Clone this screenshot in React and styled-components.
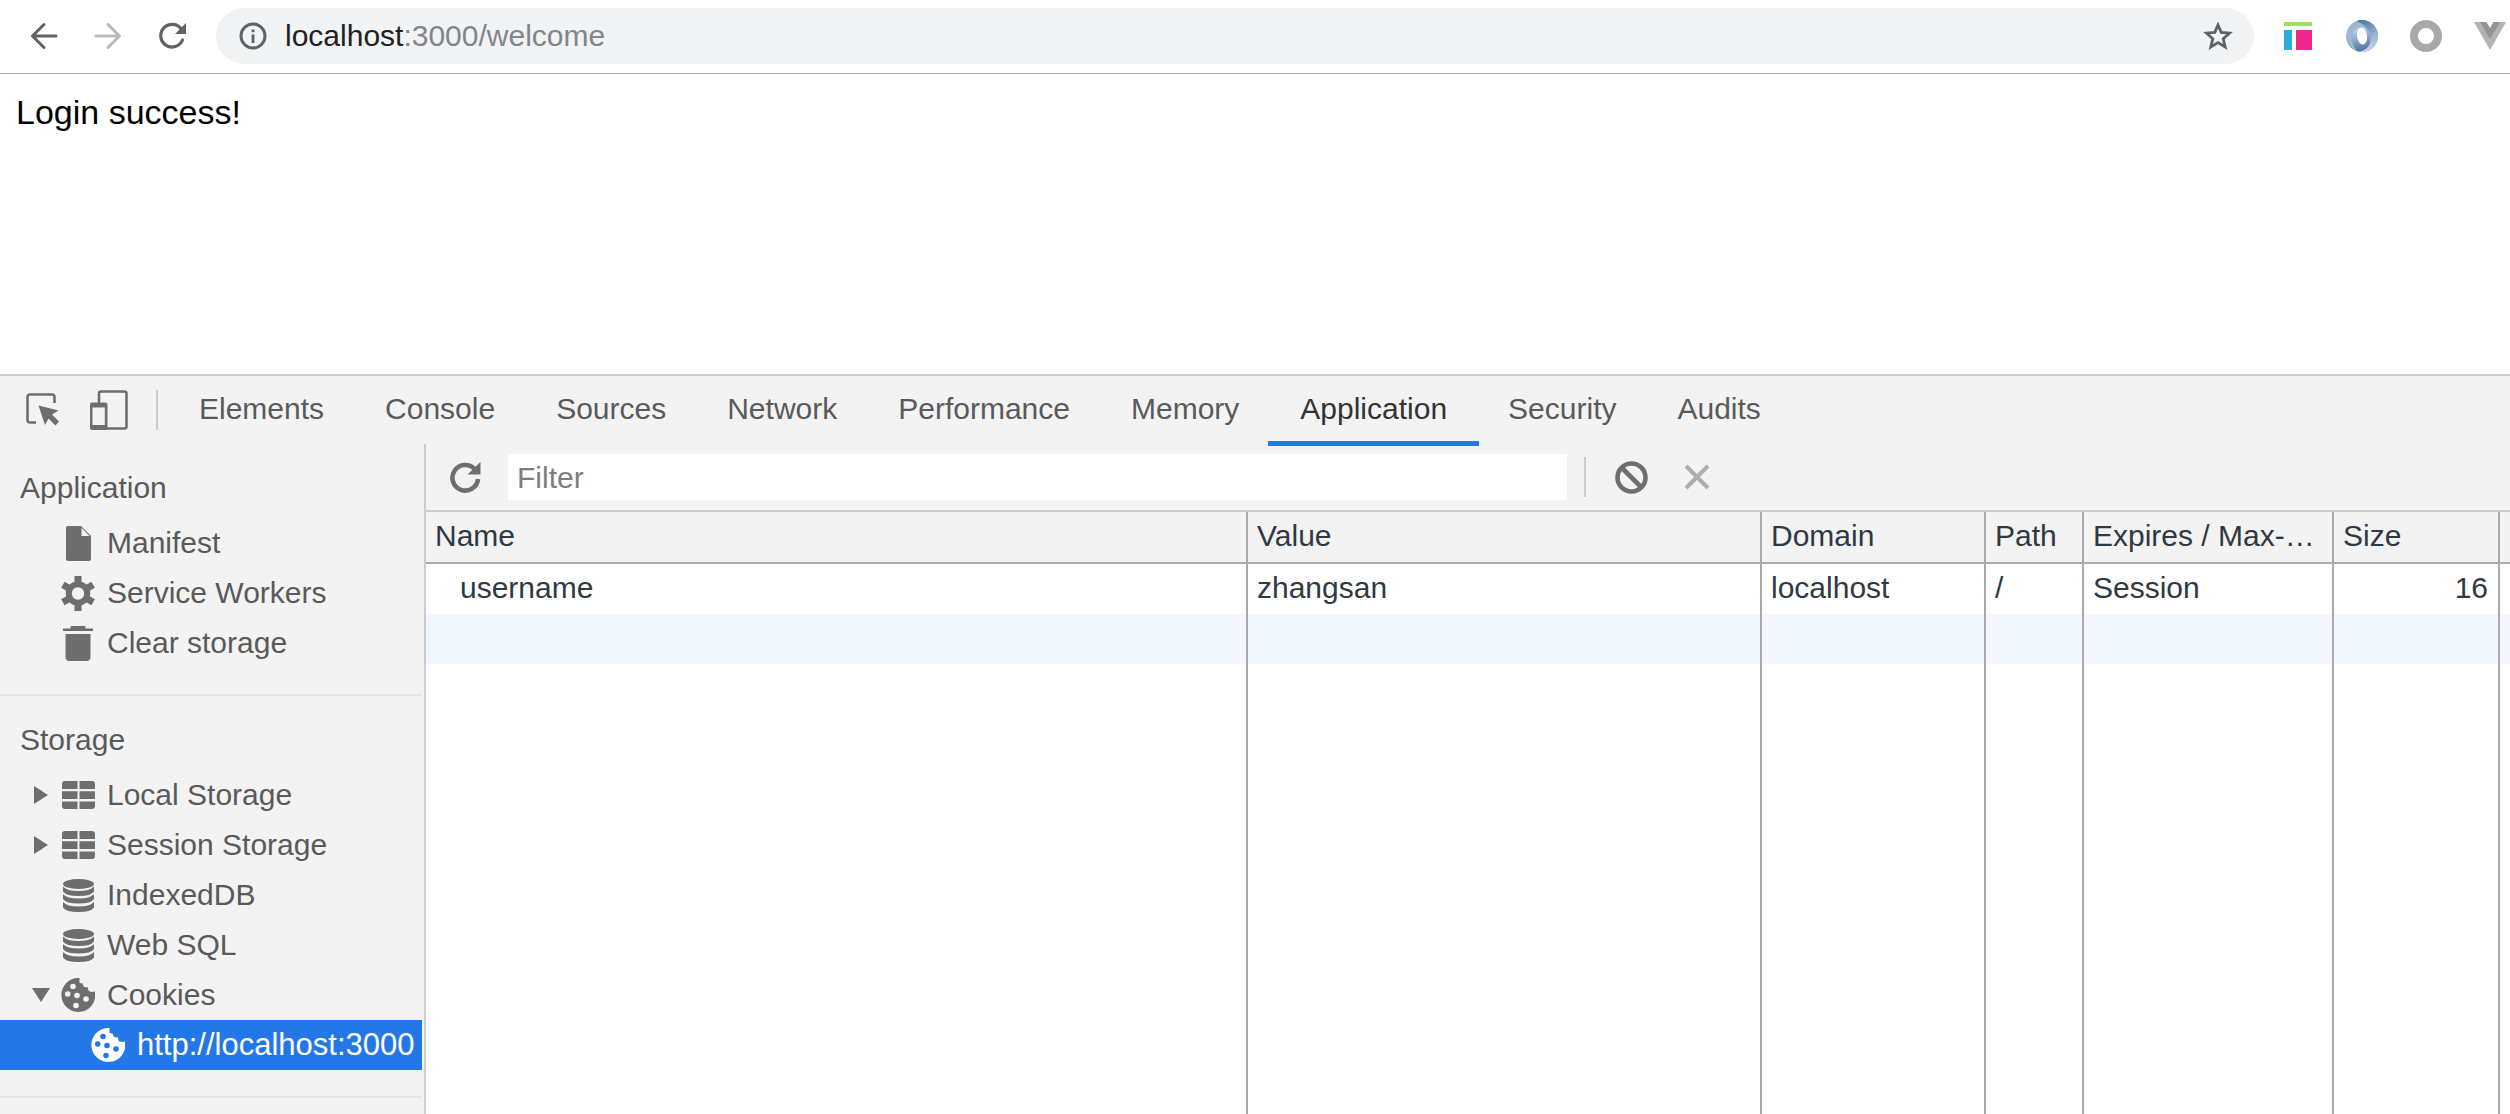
import React, { useState } from 'react'
import styled, { createGlobalStyle } from 'styled-components'


const GlobalStyle = createGlobalStyle`
    * {
        box-sizing: border-box;
    }

    body {
        margin: 0;
        background-color: #fff;
        font-family: "Liberation Sans", Arial, Helvetica, sans-serif;
        font-size: 30px;
    }

    button, input {
        font: inherit;
        color: inherit;
        border: 0;
        padding: 0;
        background: none;
    }

    svg {
        display: block;
    }
`

const Window = styled.div`
    display: flex;
    flex-direction: column;
    height: 100vh;
    overflow: hidden;
`

const BrowserBar = styled.header`
    display: flex;
    flex: none;
    align-items: center;
    padding: 8px 4px 9px 12px;
    border-bottom: 1px solid #a9abae;
`

const NavButton = styled.button`
    display: grid;
    place-items: center;
    width: 64px;
    height: 56px;
    color: ${props => props.disabled ? '#bababa' : '#5f6368'};
`

const AddressBar = styled.div`
    display: flex;
    flex: 1;
    align-items: center;
    min-width: 0;
    height: 56px;
    margin: 0 28px 0 12px;
    padding: 0 20px 0 23px;
    border-radius: 28px;
    background-color: #f1f3f4;
    color: #5f6368;
`

const Url = styled.div`
    flex: 1;
    margin-left: 18px;
    color: #80868b;
    font-size: 30px;
    outline: none;

    b {
        color: #202124;
        font-weight: normal;
    }
`

const Extensions = styled.div`
    display: flex;
    flex: none;
    gap: 32px;
`

const ExtensionButton = styled.button`
    display: grid;
    place-items: center;
    width: 32px;
    height: 32px;
`

const Page = styled.main`
    flex: none;
    min-height: 300px;
    padding: 16px;
    color: #000;
    font-size: 34px;
    line-height: 44px;
`

const DevTools = styled.section`
    display: flex;
    flex: 1;
    flex-direction: column;
    min-height: 0;
    border-top: 2px solid #ccc;
    background-color: #f3f3f3;
    color: #5a5a5a;
`

const TabBar = styled.div`
    position: relative;
    z-index: 1;
    display: flex;
    flex: none;
    height: 68px;
    padding-left: 10px;
`

const ToolButton = styled.button`
    display: grid;
    place-items: center;
    flex: none;
    width: 66px;
    color: ${props => props.disabled ? '#adadad' : '#6e6e6e'};
`

const Divider = styled.span`
    flex: none;
    align-self: center;
    width: 2px;
    height: 40px;
    margin: 0 12px 0 14px;
    background-color: #ccc;
`

const Tab = styled.button`
    height: 70px;
    margin-left: -3px;
    padding: 0 32px;
    border-bottom: 5px solid ${props => props.$active ? '#2678e3' : 'transparent'};
    color: ${props => props.$active ? '#333' : '#5a5a5a'};
`

const Panels = styled.div`
    display: flex;
    flex: 1;
    min-height: 0;
`

const Sidebar = styled.nav`
    flex: none;
    width: 426px;
    padding-right: 2px;
    border-right: 2px solid #ccc;
    overflow: hidden;
`

const Group = styled.section`
    padding: 14px 0 26px;
    border-bottom: 2px solid #e6e6e6;
`

const GroupTitle = styled.h2`
    margin: 0;
    padding-left: 20px;
    font-size: 30px;
    font-weight: normal;
    line-height: 60px;
`

const TreeItem = styled.button`
    display: flex;
    align-items: center;
    width: 100%;
    height: 50px;
    padding-left: ${props => props.$nested ? '60px' : '30px'};
    background-color: ${props => props.$selected ? '#2477e6' : 'transparent'};
    color: ${props => props.$selected ? '#fff' : '#5a5a5a'};
    font-size: ${props => props.$selected ? '31px' : '30px'};
    text-align: left;
    white-space: nowrap;
`

const Arrow = styled.span`
    display: grid;
    place-items: center;
    flex: none;
    width: 22px;
    margin-right: 8px;
    color: #6e6e6e;
`

const ItemIcon = styled.span`
    display: grid;
    place-items: center;
    flex: none;
    width: 36px;
    margin-right: 11px;
    color: ${props => props.$selected ? '#fff' : '#6e6e6e'};
`

const Main = styled.div`
    display: flex;
    flex: 1;
    flex-direction: column;
    min-width: 0;
`

const Toolbar = styled.div`
    display: flex;
    flex: none;
    height: 68px;
    padding-left: 6px;
    border-bottom: 2px solid #ccc;
`

const FilterInput = styled.input`
    flex: 0 1 1059px;
    align-self: center;
    min-width: 0;
    height: 46px;
    margin: 0 3px 0 10px;
    padding: 2px 9px 0;
    background-color: #fff;
    color: #333;

    &::placeholder {
        color: #7d7d7d;
    }
`

const Grid = styled.div`
    display: grid;
    flex: 1;
    min-height: 0;
    background-color: #fff;
`

const Table = styled.table`
    width: 100%;
    height: 100%;
    table-layout: fixed;
    border-collapse: separate;
    border-spacing: 0;
    color: #303942;
`

const Col = styled.col`
    width: ${props => props.$width || 'auto'};
`

const HeadCell = styled.th`
    height: 52px;
    padding: 0 8px 3px 9px;
    border-right: 2px solid #aaa;
    border-bottom: 2px solid #aaa;
    background-color: #f3f3f3;
    font-weight: normal;
    text-align: left;
    white-space: nowrap;
    overflow: hidden;
    text-overflow: ellipsis;

    &:last-child {
        border-right: 0;
    }
`

const Row = styled.tr`
    height: ${props => props.$fill ? 'auto' : '50px'};
    background-color: ${props => props.$striped ? '#f2f7fd' : '#fff'};
`

const Cell = styled.td`
    padding: 0 10px 3px ${props => props.$indent ? '34px' : '9px'};
    border-right: 2px solid #aaa;
    text-align: ${props => props.$right ? 'right' : 'left'};
    white-space: nowrap;

    &:last-child {
        padding: 0;
        border-right: 0;
    }
`


const BackIcon = () => (
    <svg width="28" height="28" viewBox="0 0 28 28" fill="none" stroke="currentColor" strokeWidth="3" strokeLinecap="round" strokeLinejoin="round">
        <path d="M26 14H3M14 2.5L2.5 14L14 25.5" />
    </svg>
)

const ForwardIcon = () => (
    <svg width="28" height="28" viewBox="0 0 28 28" fill="none" stroke="currentColor" strokeWidth="3" strokeLinecap="round" strokeLinejoin="round">
        <path d="M2 14h23M14 2.5L25.5 14L14 25.5" />
    </svg>
)

const ReloadIcon = () => (
    <svg width="28" height="28" viewBox="0 0 28 28">
        <path d="M23.5 7.5A11.3 11.3 0 1 0 24.5 18" fill="none" stroke="currentColor" strokeWidth="3.2" strokeLinecap="round" />
        <path d="M28 1V12H17Z" fill="currentColor" />
    </svg>
)

const InfoIcon = () => (
    <svg width="28" height="28" viewBox="0 0 28 28">
        <circle cx="14" cy="14" r="12" fill="none" stroke="currentColor" strokeWidth="3" />
        <path d="M12.6 12.5h2.8V21h-2.8zM12.6 7.5h2.8v2.8h-2.8z" fill="currentColor" />
    </svg>
)

const StarIcon = () => (
    <svg width="30" height="28" viewBox="0 0 30 28" fill="none" stroke="currentColor" strokeWidth="2.8">
        <path d="M15 3L18.2 10.4L26.5 11.2L20.2 16.7L22.2 25L15 20.6L7.8 25L9.8 16.7L3.5 11.2L11.8 10.4Z" />
    </svg>
)

const LayoutExtIcon = () => (
    <svg width="28" height="28" viewBox="0 0 28 28">
        <rect width="28" height="4" fill="#a4de5c" />
        <rect y="8" width="8" height="20" fill="#29abe2" />
        <rect x="12" y="8" width="16" height="20" fill="#f0278c" />
    </svg>
)

const JsonExtIcon = () => (
    <svg width="32" height="32" viewBox="0 0 32 32">
        <defs>
            <linearGradient id="ringLeft" x1="0" y1="0" x2="0.3" y2="1">
                <stop offset="0" stopColor="#86a3c3" />
                <stop offset="0.4" stopColor="#b4cae2" />
                <stop offset="1" stopColor="#54769d" />
            </linearGradient>
            <linearGradient id="ringRight" x1="0" y1="0" x2="0.3" y2="1">
                <stop offset="0" stopColor="#4d719a" />
                <stop offset="0.6" stopColor="#8fadcc" />
                <stop offset="1" stopColor="#bfd3e8" />
            </linearGradient>
        </defs>
        <circle cx="16" cy="16" r="16" fill="url(#ringLeft)" />
        <path d="M10 1.200A16 16 0 1 1 13 31.700C22 30 26 23 24 15C22 8 17 3 10 1.200Z" fill="url(#ringRight)" />
        <path d="M5 5Q14 2 20 8Q11 5 7 12Q3 21 11 31Q2 27 1 18Q1 10 5 5Z" fill="#9db7d4" />
        <ellipse cx="16" cy="16" rx="5" ry="8.500" fill="#fff" transform="rotate(-8 16 16)" />
    </svg>
)

const RingExtIcon = () => (
    <svg width="32" height="32" viewBox="0 0 32 32">
        <circle cx="16" cy="16" r="12" fill="none" stroke="#a8a8a8" strokeWidth="8" />
    </svg>
)

const VueExtIcon = () => (
    <svg width="32" height="28" viewBox="0 0 32 28">
        <path d="M0 0H32L16 28Z" fill="#b3b3b3" />
        <path d="M6 0H26L16 17Z" fill="#939393" />
        <path d="M12.500 0H19.500L16 6Z" fill="#fff" />
    </svg>
)

const InspectIcon = () => (
    <svg width="34" height="34" viewBox="0 0 34 34">
        <path d="M10 29.500H4Q1.500 29.500 1.500 27V4Q1.500 1.500 4 1.500H26Q28.500 1.500 28.500 4V10" fill="none" stroke="currentColor" strokeWidth="2.600" />
        <path d="M12.500 12.500L32.500 17.500L26 21.500L33 28.500L29.500 32.500L22.500 25.500L19 32Z" fill="currentColor" />
    </svg>
)

const DeviceIcon = () => (
    <svg width="38" height="40" viewBox="0 0 38 40">
        <path d="M9 13V3.500Q9 1.500 11 1.500H34.500Q36.500 1.500 36.500 3.500V36.500Q36.500 38.500 34.500 38.500H15" fill="none" stroke="currentColor" strokeWidth="2.600" />
        <path fillRule="evenodd" d="M2 12.500H15.500Q17.500 12.500 17.500 14.500V40H2Q0 40 0 38V14.500Q0 12.500 2 12.500ZM2.500 17.500V35H14.800V17.500Z" fill="currentColor" />
    </svg>
)

const RefreshIcon = () => (
    <svg width="31" height="31" viewBox="0 0 31 31">
        <path d="M25 7.500A12.800 12.800 0 1 0 28 17" fill="none" stroke="currentColor" strokeWidth="4.600" />
        <path d="M30.500 0V12.500H17.500Z" fill="currentColor" />
    </svg>
)

const BlockIcon = () => (
    <svg width="33" height="33" viewBox="0 0 33 33" fill="none" stroke="currentColor" strokeWidth="4.600">
        <circle cx="16.5" cy="16.5" r="14" />
        <path d="M7 7L26 26" />
    </svg>
)

const CloseIcon = () => (
    <svg width="26" height="26" viewBox="0 0 26 26" fill="none" stroke="currentColor" strokeWidth="4">
        <path d="M2 2L24 24M24 2L2 24" />
    </svg>
)

const RightArrow = () => (
    <svg width="14" height="18" viewBox="0 0 14 18">
        <path d="M0 0L14 9L0 18Z" fill="currentColor" />
    </svg>
)

const DownArrow = () => (
    <svg width="18" height="14" viewBox="0 0 18 14">
        <path d="M0 0H18L9 14Z" fill="currentColor" />
    </svg>
)

const FileIcon = () => (
    <svg width="25" height="35" viewBox="0 0 25 35">
        <path d="M2 0H15L25 10V33Q25 35 23 35H2Q0 35 0 33V2Q0 0 2 0Z" fill="currentColor" />
        <path d="M15.500 1.800V10H23.500Z" fill="#f3f3f3" />
    </svg>
)

const GearIcon = () => (
    <svg width="34" height="35" viewBox="0 0 34 35">
        <g fill="none" stroke="currentColor">
            <circle cx="17" cy="17.5" r="9.200" strokeWidth="6" />
            <g strokeWidth="7">
                <path d="M17 0V7M17 28V35" />
                <path d="M17 0V7M17 28V35" transform="rotate(60 17 17.5)" />
                <path d="M17 0V7M17 28V35" transform="rotate(120 17 17.5)" />
            </g>
        </g>
    </svg>
)

const TrashIcon = () => (
    <svg width="30" height="35" viewBox="0 0 30 35">
        <path d="M0 2.500H7.500V1Q7.500 0 8.500 0H21.500Q22.500 0 22.500 1V2.500H30V5H0ZM2.500 8H27.500V31Q27.500 35 23.500 35H6.500Q2.500 35 2.500 31Z" fill="currentColor" />
    </svg>
)

const TableIcon = () => (
    <svg width="33" height="28" viewBox="0 0 33 28">
        <path d="M3 0H15.500V8H0V3Q0 0 3 0ZM17.500 0H30Q33 0 33 3V8H17.500ZM0 10.300H15.500V18H0ZM17.500 10.300H33V18H17.500ZM0 20.500H15.500V28H3Q0 28 0 25ZM17.500 20.500H33V25Q33 28 30 28H17.500Z" fill="currentColor" />
    </svg>
)

const DatabaseIcon = () => (
    <svg width="31" height="33" viewBox="0 0 31 33" fill="currentColor">
        <ellipse cx="15.500" cy="5" rx="15.500" ry="5" />
        <path d="M0 7.500Q4 12 15.500 12T31 7.500V12.500Q28 17 15.500 17T0 12.500Z" />
        <path d="M0 15.300Q4 19.500 15.500 19.500T31 15.300V20Q28 24.500 15.500 24.500T0 20Z" />
        <path d="M0 23Q4 27.500 15.500 27.500T31 23V28.500Q28 33 15.500 33T0 28.500Z" />
    </svg>
)

const CookieIcon = ({ hole = '#f3f3f3' }) => (
    <svg width="34" height="34" viewBox="0 0 34 34">
        <path d="M18.500 0A17 17 0 1 0 34 13.500L30.500 14L27.500 13L27 9.500L23 9L21.500 5.500L18.500 5Z" fill="currentColor" />
        <g fill={hole}>
            <circle cx="12" cy="8.500" r="2.800" />
            <circle cx="6.700" cy="16" r="2.800" />
            <circle cx="16" cy="17.500" r="2.800" />
            <circle cx="25" cy="21" r="2.800" />
            <circle cx="15" cy="27.500" r="2.800" />
        </g>
    </svg>
)


const tabs = ['Elements', 'Console', 'Sources', 'Network', 'Performance', 'Memory', 'Application', 'Security', 'Audits']

const groups = [
    {
        title: 'Application',
        items: [
            { label: 'Manifest', icon: <FileIcon /> },
            { label: 'Service Workers', icon: <GearIcon /> },
            { label: 'Clear storage', icon: <TrashIcon /> },
        ],
    },
    {
        title: 'Storage',
        items: [
            { label: 'Local Storage', icon: <TableIcon />, arrow: <RightArrow /> },
            { label: 'Session Storage', icon: <TableIcon />, arrow: <RightArrow /> },
            { label: 'IndexedDB', icon: <DatabaseIcon /> },
            { label: 'Web SQL', icon: <DatabaseIcon /> },
            { label: 'Cookies', icon: <CookieIcon />, arrow: <DownArrow /> },
            { label: 'http://localhost:3000', icon: <CookieIcon hole="#2477e6" />, nested: true, selected: true },
        ],
    },
]

const columns = [
    { name: 'Name' },
    { name: 'Value', width: '514px' },
    { name: 'Domain', width: '224px' },
    { name: 'Path', width: '98px' },
    { name: 'Expires / Max-Age', width: '250px' },
    { name: 'Size', width: '166px' },
    { name: '', width: '10px' },
]

const cookies = [
    ['username', 'zhangsan', 'localhost', '/', 'Session', '16', ''],
]

const App = () => {
    const [activeTab, setActiveTab] = useState('Application')
    const [filter, setFilter] = useState('')

    const rows = cookies.filter(cookie => cookie.join(' ').includes(filter))

    return (
        <Window>
            <GlobalStyle />

            <BrowserBar>
                <NavButton aria-label="Back"><BackIcon /></NavButton>
                <NavButton aria-label="Forward" disabled><ForwardIcon /></NavButton>
                <NavButton aria-label="Reload"><ReloadIcon /></NavButton>
                <AddressBar>
                    <InfoIcon />
                    <Url role="textbox" aria-label="Address" tabIndex={0}><b>localhost</b>:3000/welcome</Url>
                    <ExtensionButton aria-label="Bookmark"><StarIcon /></ExtensionButton>
                </AddressBar>
                <Extensions>
                    <ExtensionButton aria-label="Layout"><LayoutExtIcon /></ExtensionButton>
                    <ExtensionButton aria-label="JSON"><JsonExtIcon /></ExtensionButton>
                    <ExtensionButton aria-label="Recorder"><RingExtIcon /></ExtensionButton>
                    <ExtensionButton aria-label="Vue"><VueExtIcon /></ExtensionButton>
                </Extensions>
            </BrowserBar>

            <Page>Login success!</Page>

            <DevTools>
                <TabBar>
                    <ToolButton aria-label="Inspect"><InspectIcon /></ToolButton>
                    <ToolButton aria-label="Device toolbar"><DeviceIcon /></ToolButton>
                    <Divider />
                    {tabs.map(tab => (
                        <Tab key={tab} $active={tab === activeTab} onClick={() => setActiveTab(tab)}>{tab}</Tab>
                    ))}
                </TabBar>

                <Panels>
                    <Sidebar>
                        {groups.map(group => (
                            <Group key={group.title}>
                                <GroupTitle>{group.title}</GroupTitle>
                                {group.items.map(item => (
                                    <TreeItem key={item.label} $nested={item.nested} $selected={item.selected}>
                                        <Arrow>{item.arrow}</Arrow>
                                        <ItemIcon $selected={item.selected}>{item.icon}</ItemIcon>
                                        {item.label}
                                    </TreeItem>
                                ))}
                            </Group>
                        ))}
                    </Sidebar>

                    <Main>
                        <Toolbar>
                            <ToolButton aria-label="Refresh"><RefreshIcon /></ToolButton>
                            <FilterInput
                                type="text"
                                aria-label="Filter"
                                placeholder="Filter"
                                value={filter}
                                onChange={(e) => setFilter(e.target.value)}
                            />
                            <Divider />
                            <ToolButton aria-label="Clear all"><BlockIcon /></ToolButton>
                            <ToolButton aria-label="Delete selected" disabled><CloseIcon /></ToolButton>
                        </Toolbar>

                        <Grid>
                            <Table>
                                <colgroup>
                                    {columns.map(column => <Col key={column.name} $width={column.width} />)}
                                </colgroup>
                                <thead>
                                    <tr>
                                        {columns.map(column => <HeadCell key={column.name}>{column.name}</HeadCell>)}
                                    </tr>
                                </thead>
                                <tbody>
                                    {rows.map(row => (
                                        <Row key={row[0]}>
                                            {row.map((value, i) => (
                                                <Cell key={i} $indent={i === 0} $right={i === 5}>{value}</Cell>
                                            ))}
                                        </Row>
                                    ))}
                                    <Row $striped>
                                        {columns.map(column => <Cell key={column.name} />)}
                                    </Row>
                                    <Row $fill>
                                        {columns.map(column => <Cell key={column.name} />)}
                                    </Row>
                                </tbody>
                            </Table>
                        </Grid>
                    </Main>
                </Panels>
            </DevTools>
        </Window>
    )
}

export default App
